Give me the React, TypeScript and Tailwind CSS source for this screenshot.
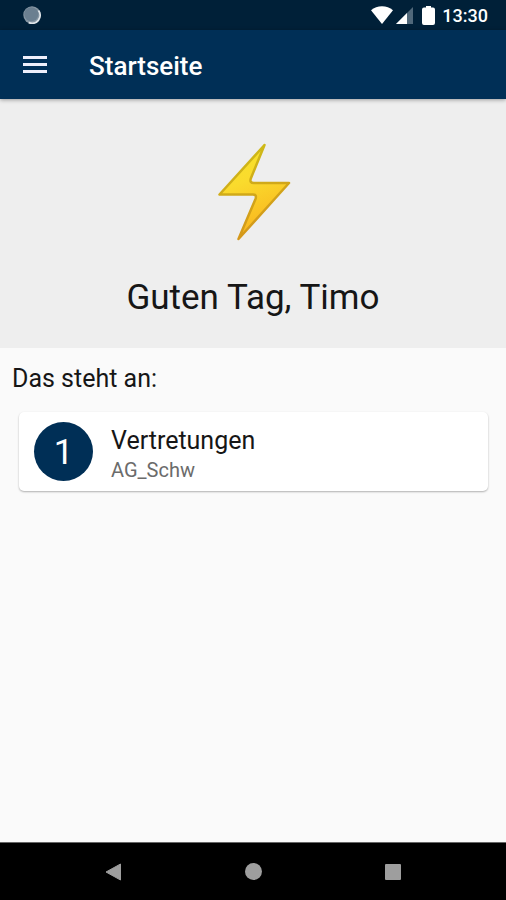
import React from "react";

function StatusBar() {
  return (
    <div className="flex h-[30px] items-center justify-between bg-[#002038] pr-[18px] pl-[23px]">
      <svg className="size-[18px]" viewBox="0 0 18 18" aria-hidden="true">
        <circle cx="9" cy="9" r="8.7" fill="#8696a3" />
        <path d="M15.5 4.5A8 8 0 0 1 5.8 16.6" fill="none" stroke="#dfe4e8" strokeWidth="1.8" />
        <circle cx="8.300" cy="8.300" r="7" fill="#6b7f90" />
      </svg>
      <div className="flex items-center text-white">
        <svg className="h-[18px] w-[22px]" viewBox="0 0 22 18" aria-hidden="true">
          <path d="M0 4.2C6 -1 16 -1 22 4.2L11 18Z" fill="currentColor" />
        </svg>
        <svg className="ml-[3px] size-[17px]" viewBox="0 0 17 17" aria-hidden="true">
          <path d="M17 0V17H0Z" fill="#50687a" />
          <path d="M11 6V17H0Z" fill="currentColor" />
        </svg>
        <svg className="ml-[9px] h-[19px] w-[13px]" viewBox="0 0 13 19" aria-hidden="true">
          <path
            d="M4 0H9V1.500H11Q13 1.500 13 3.5V17Q13 19 11 19H2Q0 19 0 17V3.500Q0 1.500 2 1.500H4Z"
            fill="currentColor"
          />
        </svg>
        <time className="ml-[7px] pt-px text-[18px] leading-8 font-medium">13:30</time>
      </div>
    </div>
  );
}

function AppBar() {
  return (
    <header className="relative z-10 flex h-[69px] items-center bg-[#002f56] pl-[23px] shadow-[0_1px_4px_rgba(0,0,0,0.35)]">
      <button type="button" aria-label="Menü" className="text-[#eeeefa]">
        <svg className="h-[19px] w-6" viewBox="0 0 24 19" aria-hidden="true">
          <path d="M0 2.500H24M0 9.500H24M0 16.500H24" stroke="currentColor" strokeWidth="3" />
        </svg>
      </button>
      <h1 className="ml-[42px] pt-[2px] text-[26px] leading-8 font-medium text-white">Startseite</h1>
    </header>
  );
}

function Greeting() {
  return (
    <section className="flex h-[249px] flex-col items-center bg-[#eeeeee] pt-[43px]">
      <svg className="h-[100px] w-[76px]" viewBox="0 0 76 100" aria-hidden="true">
        <defs>
          <linearGradient id="bolt" x1="0" y1="0" x2="0.3" y2="1">
            <stop offset="0" stopColor="#f5e52c" />
            <stop offset="0.45" stopColor="#fadb2d" />
            <stop offset="1" stopColor="#f9b51e" />
          </linearGradient>
          <linearGradient id="boltEdge" x1="0" y1="0" x2="0.3" y2="1">
            <stop offset="0" stopColor="#cdc017" />
            <stop offset="1" stopColor="#d4971a" />
          </linearGradient>
        </defs>
        <path
          d="M49.500 3L4.500 52.500H38Q42 52.500 40.500 57L23.500 97L74 41H39Q34 41 36 36Z"
          fill="url(#bolt)"
          stroke="url(#boltEdge)"
          strokeWidth="2.500"
          strokeLinejoin="round"
        />
      </svg>
      <p className="mt-9 text-[35px] leading-10 text-[#161616]">Guten Tag, Timo</p>
    </section>
  );
}

function TaskCard({ count, title, detail }: { count: number; title: string; detail: string }) {
  return (
    <li className="flex h-[79px] items-center rounded-[5px] bg-white pl-[15px] shadow-[0_1px_2px_rgba(0,0,0,0.3)]">
      <span className="flex size-[59px] shrink-0 items-center justify-center rounded-full bg-[#002f56] pt-1 text-[35px] text-white">
        {count}
      </span>
      <div className="ml-[18px] pt-1">
        <h3 className="text-[25px] leading-8 text-[#161616]">{title}</h3>
        <p className="text-[20px] leading-[26px] text-[#6b6b6b]">{detail}</p>
      </div>
    </li>
  );
}

function NavigationBar() {
  return (
    <nav className="flex h-[58px] justify-center border-t border-[#666666] bg-black text-[#9e9e9e]">
      <button type="button" aria-label="Zurück" className="flex w-[140px] items-center justify-center">
        <svg className="size-[18px]" viewBox="0 0 18 18" aria-hidden="true">
          <path d="M16.500 1V17L2 9Z" fill="currentColor" stroke="currentColor" strokeLinejoin="round" />
        </svg>
      </button>
      <button type="button" aria-label="Startbildschirm" className="flex w-[140px] items-center justify-center">
        <span className="size-[17px] rounded-full bg-[#9e9e9e]" />
      </button>
      <button type="button" aria-label="Übersicht" className="flex w-[140px] items-center justify-center">
        <span className="size-4 rounded-[1px] bg-[#9e9e9e]" />
      </button>
    </nav>
  );
}

export default function App() {
  return (
    <div className="flex min-h-screen flex-col bg-[#fafafa] font-[Roboto,sans-serif]">
      <StatusBar />
      <AppBar />
      <main className="flex-1">
        <Greeting />
        <section>
          <h2 className="px-3 pt-[15px] text-[25px] leading-8 text-[#161616]">Das steht an:</h2>
          <ul className="mt-[17px] mr-[18px] ml-[19px]">
            <TaskCard count={1} title="Vertretungen" detail="AG_Schw" />
          </ul>
        </section>
      </main>
      <NavigationBar />
    </div>
  );
}
